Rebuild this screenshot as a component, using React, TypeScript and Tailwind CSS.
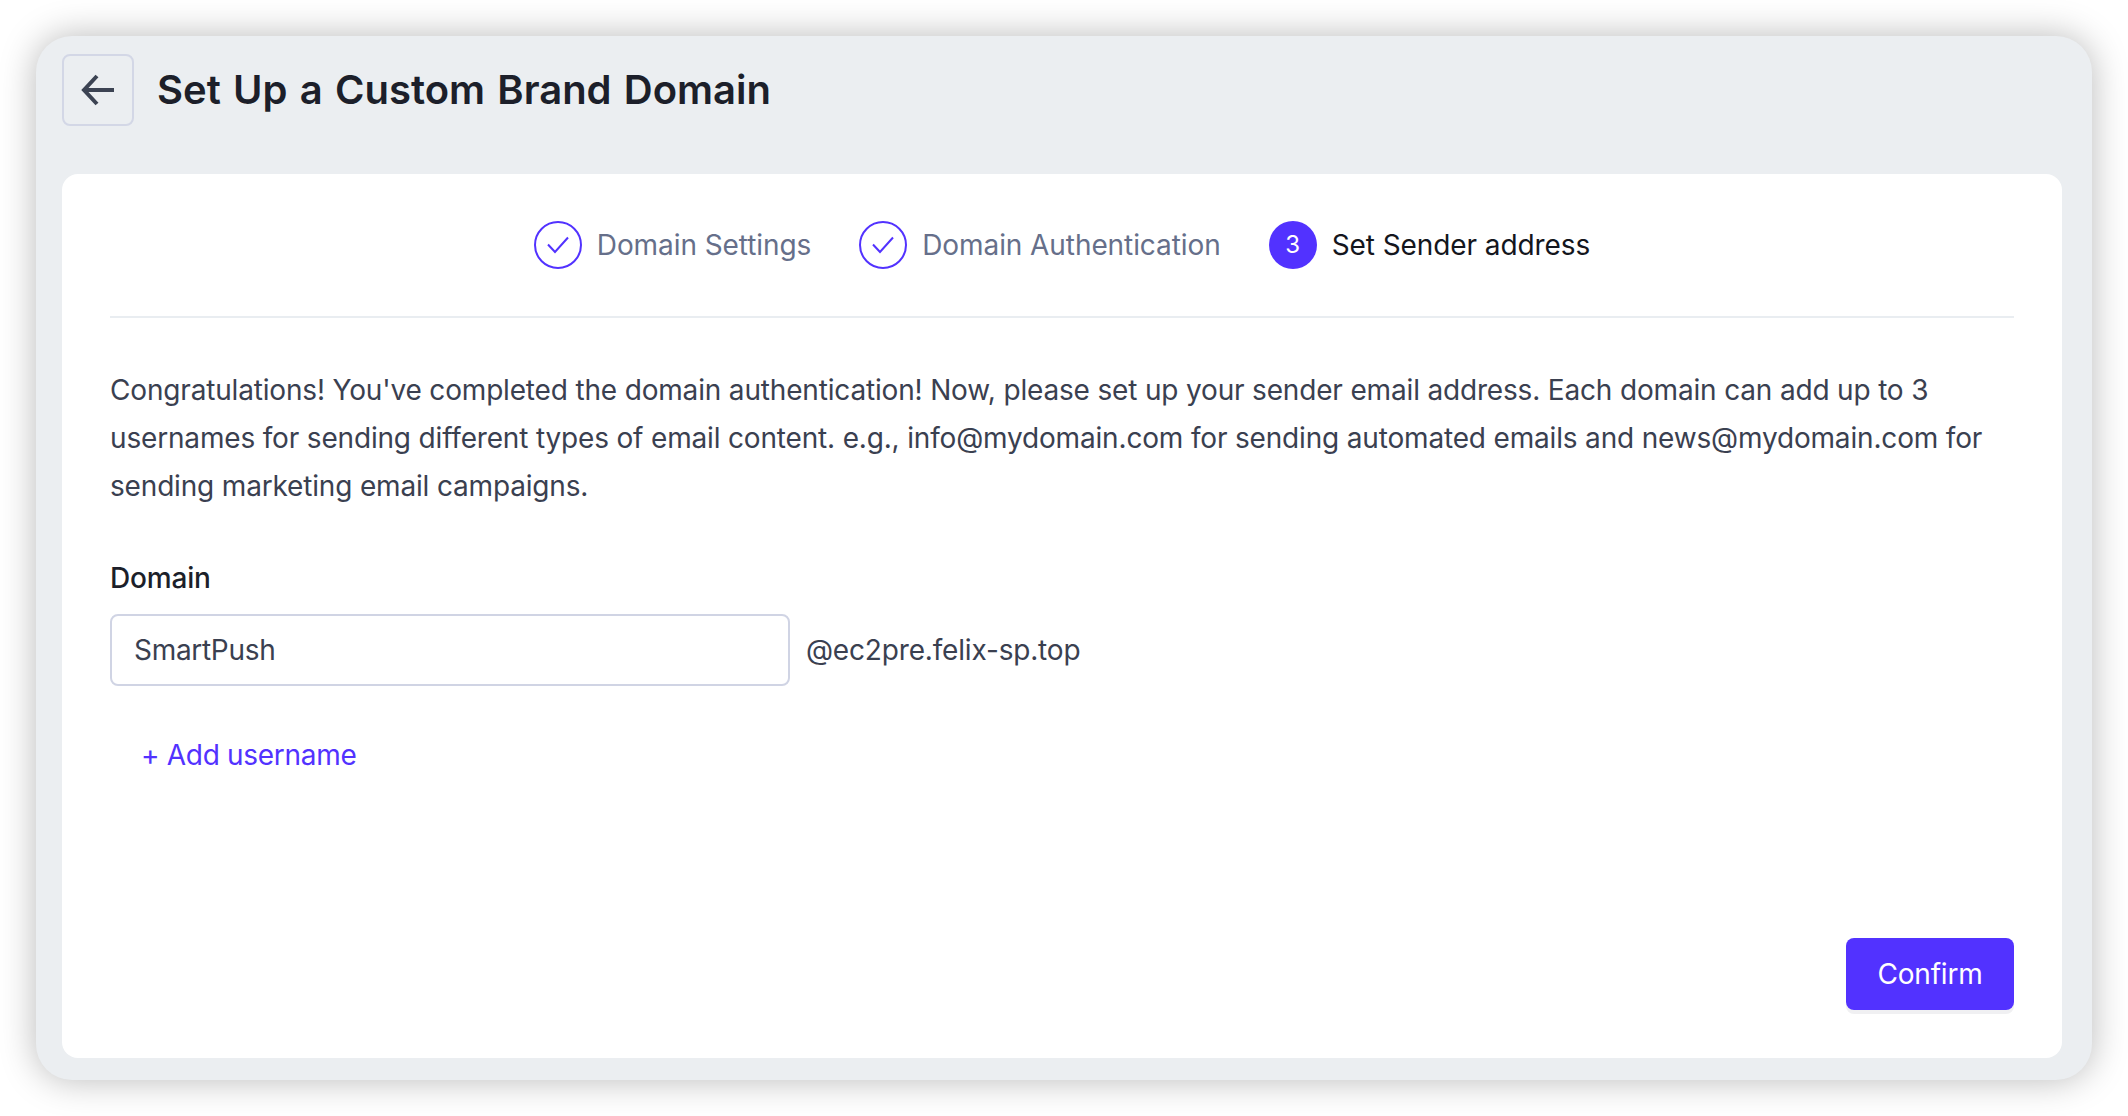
import React from 'react';

const Check = () => (
  <span className="w-12 h-12 rounded-full border-2 border-[#5232ff] flex items-center justify-center shrink-0">
    <svg width="24" height="24" viewBox="0 0 24 24" fill="none" stroke="#5232ff" strokeWidth="2">
      <path d="M2 11.5L9 19L22 4.5" />
    </svg>
  </span>
);

const App: React.FC = () => {
  return (
    <div className="w-[2128px] h-[1116px] bg-white p-9 font-['Inter',sans-serif]">
      <div className="h-full flex flex-col bg-[#ebeef1] rounded-[36px] shadow-[0_0_36px_rgba(0,0,0,0.28)] pt-[18px] pl-[26px] pr-[30px] pb-[22px]">
        {/* Header */}
        <div className="flex items-center gap-[23px] h-[72px] shrink-0">
          <button className="w-[72px] h-[72px] border-2 border-[#d3d7e6] rounded-lg flex items-center justify-center">
            <svg width="36" height="36" viewBox="0 0 36 36" fill="none" stroke="#3c4353" strokeWidth="4">
              <path d="M34 18H4M17 4L4 18l13 14" />
            </svg>
          </button>
          <h1 className="text-[40px] leading-[48px] font-semibold text-[#1c1f2a] [word-spacing:2.2px]">Set Up a Custom Brand Domain</h1>
        </div>

        {/* Card */}
        <div className="mt-12 flex-1 bg-white rounded-2xl px-12 flex flex-col tracking-[-0.17px]">
          <div className="h-[144px] shrink-0 border-b-2 border-[#e9edf1] flex items-center justify-center gap-12 tracking-[-0.08px]">
            <div className="flex items-center gap-[15px]">
              <Check />
              <span className="text-[28px] text-[#666f8a]">Domain Settings</span>
            </div>
            <div className="flex items-center gap-[15px]">
              <Check />
              <span className="text-[28px] text-[#666f8a]">Domain Authentication</span>
            </div>
            <div className="flex items-center gap-[15px]">
              <span className="w-12 h-12 rounded-full bg-[#5232ff] text-white text-2xl flex items-center justify-center">3</span>
              <span className="text-[28px] text-[#14161d]">Set Sender address</span>
            </div>
          </div>

          <p className="mt-[48px] text-[28px] leading-[48px] text-[#3a4050]">
            Congratulations! You've completed the domain authentication! Now, please set up your sender email address. Each domain can add up to 3 usernames for sending different types of email content. e.g., info@mydomain.com for sending automated emails and news@mydomain.com for sending marketing email campaigns.
          </p>

          <label className="mt-[50px] text-[28px] leading-[36px] font-medium text-[#1c1f2a]">Domain</label>
          <div className="mt-[18px] flex items-center gap-4">
            <input
              readOnly
              value="SmartPush"
              className="w-[680px] h-[72px] border-2 border-[#d0d4e4] rounded-lg px-[22px] text-[28px] tracking-[-0.3px] text-[#3a4050] outline-none"
            />
            <span className="text-[28px] text-[#3a4050]">@ec2pre.felix-sp.top</span>
          </div>
          <div className="mt-[51px] pl-[31px] text-[28px] leading-[36px] tracking-[-0.3px] text-[#5232ff]">+ Add username</div>

          <div className="mt-auto mb-12 flex justify-end">
            <button className="w-[168px] h-[72px] bg-[#5232ff] text-white text-[28px] rounded-lg shadow-[0_4px_0_#f0f0f2]">Confirm</button>
          </div>
        </div>
      </div>
    </div>
  );
};

export default App;
